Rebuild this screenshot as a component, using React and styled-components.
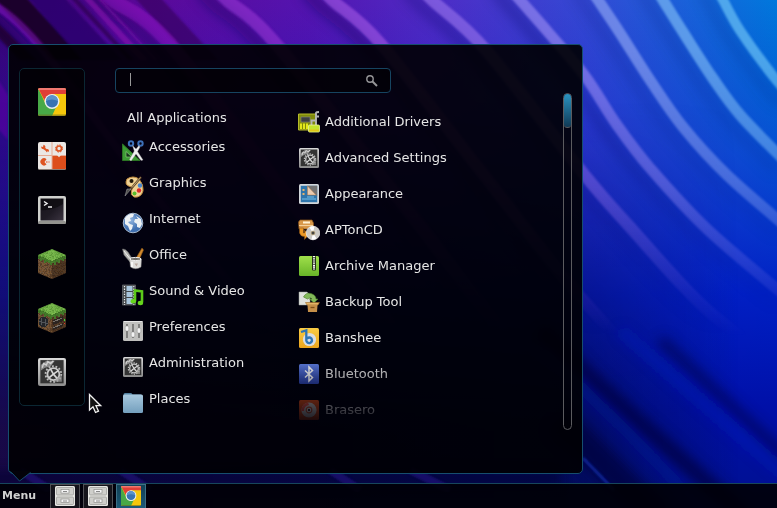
import React from "react";
import styled, { createGlobalStyle, css } from "styled-components";

const Global = createGlobalStyle`
  * { box-sizing: border-box; }
  body { margin: 0; background: #05051c; font-family: "DejaVu Sans", Verdana, sans-serif; }
  button, input { font: inherit; color: inherit; }
  ul { list-style: none; margin: 0; padding: 0; }
`;

const Desktop = styled.div`
  position: relative;
  display: flex;
  flex-direction: column;
  justify-content: flex-end;
  min-height: 100vh;
  overflow: hidden;
  color: #e6e6e6;
  font-size: 13px;
`;

const WallpaperSvg = styled.svg`
  position: absolute;
  inset: 0;
  width: 100%;
  height: 100%;
`;

const MenuPanel = styled.main`
  position: relative;
  display: flex;
  align-items: flex-start;
  gap: 30px;
  max-width: 575px;
  margin: 0 8px 9px;
  padding: 23px 10px 43px;
  border: 1px solid #164e6e;
  border-radius: 5px;
  background: rgba(0, 0, 2, 0.91);
`;

const Tail = styled.svg`
  position: absolute;
  left: 0;
  bottom: -9px;
  width: 24px;
  height: 11px;
`;

const Pointer = styled.svg`
  position: absolute;
  left: 79px;
  top: 348px;
  width: 16px;
  height: 22px;
`;

const Favourites = styled.nav`
  display: flex;
  flex-direction: column;
  align-items: center;
  gap: 26px;
  flex: none;
  width: 66px;
  padding: 19px 0;
  border: 1px solid #0b2733;
  border-radius: 5px;
  background: rgba(0, 0, 0, 0.5);
`;

const IconButton = styled.button`
  display: block;
  padding: 0;
  border: 0;
  background: none;
  line-height: 0;
  svg { width: 28px; height: 28px; overflow: visible; }
`;

const Content = styled.div`
  flex: 1;
  min-width: 0;
`;

const SearchBox = styled.label`
  display: flex;
  align-items: center;
  max-width: 276px;
  height: 25px;
  padding: 0 12px 0 14px;
  border: 1px solid #164460;
  border-radius: 4px;
  background: rgba(0, 0, 0, 0.5);
  svg { width: 13px; height: 13px; flex: none; }
`;

const SearchInput = styled.input`
  flex: 1;
  min-width: 0;
  border: 0;
  padding: 0;
  outline: 0;
  background: none;
`;

const Caret = styled.span`
  width: 1px;
  height: 13px;
  margin-bottom: 2px;
  background: #999;
`;

const Lists = styled.div`
  display: flex;
  height: 337px;
`;

const Categories = styled.ul`
  flex: none;
  width: 183px;
  padding: 11px 0 0 7px;
`;

const Apps = styled.ul`
  flex: 1;
  padding-top: 11px;
  overflow: hidden;
  mask-image: linear-gradient(#000 calc(100% - 74px), transparent);
`;

const Entry = styled.button`
  display: flex;
  gap: 5px;
  align-items: center;
  width: 100%;
  height: 36px;
  padding: 0;
  border: 0;
  background: none;
  text-align: left;
  white-space: nowrap;
  line-height: 16px;
  svg { width: 22px; height: 22px; flex: none; }
  ${(p) => p.$kind === "all" && css`
    height: 29px;
    padding: 0 0 1px 5px;
  `}
  ${(p) => p.$kind === "category" && css`
    span { padding-bottom: 8px; }
  `}
`;

const Scrollbar = styled.div`
  flex: none;
  width: 9px;
  border: 1px solid #5b5b5f;
  border-radius: 5px;
`;

const Thumb = styled.div`
  height: 34px;
  border-bottom: 1px solid #5b5b5f;
  border-radius: 4px;
  background: linear-gradient(#2b93c0, #103a56);
`;

const Taskbar = styled.footer`
  position: relative;
  display: flex;
  gap: 3px;
  height: 25px;
  border-top: 1px solid #17465c;
  background: rgba(0, 0, 4, 0.9);
`;

const MenuButton = styled.button`
  width: 47px;
  padding: 0 0 2px 2px;
  border: 0;
  background: none;
  color: #d0d0d0;
  font-size: 11px;
  font-weight: bold;
  text-align: left;
`;

const TaskButton = styled.button`
  display: flex;
  justify-content: center;
  width: 30px;
  padding: 1px 0 0;
  border: 1px solid #505055;
  border-bottom: 0;
  background: ${(p) => (p.$active ? "linear-gradient(#124056, #1b5a78)" : "#15141b")};
  ${(p) => p.$active && "border-color: #3e6f86;"}
  svg { width: 20px; height: 20px; }
`;

/* ---------- wallpaper ---------- */

/* Smooth open curve through a list of points. */
const curve = (pts) => {
  let d = `M${pts[0]}`;
  for (let i = 0; i < pts.length - 1; i++) {
    const a = pts[i - 1] || pts[i];
    const b = pts[i];
    const c = pts[i + 1];
    const e = pts[i + 2] || c;
    d += `C${b[0] + (c[0] - a[0]) / 6} ${b[1] + (c[1] - a[1]) / 6} ${c[0] - (e[0] - b[0]) / 6} ${c[1] - (e[1] - b[1]) / 6} ${c[0]} ${c[1]}`;
  }
  return d;
};

const ribbons = [
  { p: [[-12, 0], [38, 44], [150, 190], [300, 360], [440, 500]], c: "#a010e0", o: 0.42, w: 8 },
  { p: [[98, -14], [113, 0], [170, 44], [290, 200], [420, 360], [560, 500]], c: "#a81fd0", o: 0.4, w: 14 },
  { p: [[212, -16], [227, 0], [276, 44], [400, 200], [510, 340], [660, 500]], c: "#a03ad8", o: 0.55, w: 13 },
  { p: [[317, -16], [332, 0], [381, 44], [480, 170], [583, 300], [690, 410], [800, 500]], c: "#a85ce8", o: 0.6, w: 12 },
  { p: [[418, -16], [432, 0], [486, 50], [583, 173], [630, 227], [704, 307], [790, 375]], c: "#9a74ee", o: 0.62, w: 12 },
  { p: [[506, -16], [520, 0], [548, 32], [585, 76], [617, 125], [650, 168], [707, 229], [790, 300]], c: "#9a8cf2", o: 0.65, w: 11 },
  { p: [[587, -16], [598, 0], [620, 33], [650, 80], [683, 127], [727, 175], [790, 230]], c: "#8ca2f2", o: 0.68, w: 11 },
  { p: [[653, -16], [663, 0], [683, 32], [712, 77], [741, 116], [790, 166]], c: "#76b4f2", o: 0.72, w: 11 },
  { p: [[714, -16], [723, 0], [741, 32], [777, 81], [795, 100]], c: "#62b8f2", o: 0.78, w: 10 },
].map((r) => ({ ...r, d: curve(r.p) }));

const Wallpaper = () => (
  <WallpaperSvg viewBox="0 0 777 508" preserveAspectRatio="xMinYMin slice" aria-hidden="true">
    <defs>
      <linearGradient id="wBase" x1="0" x2="1" y1="0" y2="0">
        <stop offset="0" stopColor="#3c0474" />
        <stop offset=".18" stopColor="#5a0898" />
        <stop offset=".4" stopColor="#5414b0" />
        <stop offset=".56" stopColor="#4e2cc6" />
        <stop offset=".75" stopColor="#3448d4" />
        <stop offset=".9" stopColor="#1664da" />
        <stop offset="1" stopColor="#0078dc" />
      </linearGradient>
      <linearGradient id="wDeep" x1="0" x2="0" y1="0" y2="1">
        <stop offset="0" stopColor="#0610b4" stopOpacity="0" />
        <stop offset=".3" stopColor="#1012c4" stopOpacity=".4" />
        <stop offset=".58" stopColor="#0014c0" stopOpacity=".88" />
        <stop offset=".8" stopColor="#0010a8" />
        <stop offset="1" stopColor="#001090" />
      </linearGradient>
      <linearGradient id="wLeft" x1="0" x2="1" y1="0" y2="0">
        <stop offset="0" stopColor="#1c0838" stopOpacity=".85" />
        <stop offset=".72" stopColor="#04082e" stopOpacity=".6" />
        <stop offset=".95" stopColor="#04082e" stopOpacity="0" />
      </linearGradient>
      <linearGradient id="wFadeMask" x1="0" x2="0" y1="0" y2="1">
        <stop offset=".1" stopColor="#fff" />
        <stop offset=".36" stopColor="#aaa" />
        <stop offset=".66" stopColor="#000" />
      </linearGradient>
      <linearGradient id="wLowMask" x1="0" x2="0" y1="0" y2="1">
        <stop offset=".2" stopColor="#000" />
        <stop offset=".85" stopColor="#fff" />
      </linearGradient>
      <mask id="fade" maskUnits="userSpaceOnUse" x="0" y="0" width="777" height="508"><rect width="777" height="508" fill="url(#wFadeMask)" /></mask>
      <mask id="low" maskUnits="userSpaceOnUse" x="0" y="0" width="777" height="508"><rect width="777" height="508" fill="url(#wLowMask)" /></mask>
      <filter id="soft" x="-10%" y="-10%" width="120%" height="120%"><feGaussianBlur stdDeviation="6" /></filter>
      <filter id="edge" x="-5%" y="-5%" width="110%" height="110%"><feGaussianBlur stdDeviation="1" /></filter>
    </defs>
    <rect width="777" height="508" fill="url(#wBase)" />
    <rect width="777" height="508" fill="url(#wDeep)" />
    <rect width="777" height="508" fill="url(#wLeft)" mask="url(#low)" />
    <g mask="url(#fade)">
      <g filter="url(#soft)" fill="none" stroke="#10005c">
        {ribbons.map((r, i) => (
          <path key={i} d={r.d} transform="translate(-13 5)" strokeWidth="12" opacity={i > 5 ? 0.15 : i > 3 ? 0.28 : 0.45} />
        ))}
      </g>
    </g>
    <g filter="url(#edge)">
      <path d="M-5 -5H24L84 60H52L-5 0Z" fill="#1a0024" opacity=".9" />
      <path d="M-5 20L-5 34L20 60H36Z" fill="#1a0024" opacity=".7" />
      <path d="M26 -5H62L122 60H82Z" fill="#28006c" opacity=".85" />
      <path d="M68 -5H74L134 60H128Z" fill="#2a0050" opacity=".7" />
      <path d="M80 -5H88L148 60H140Z" fill="#9212b4" opacity=".55" />
      <path d="M94 -5H98L158 60H154Z" fill="#9212b4" opacity=".4" />
      <path d="M132 -5H158L218 60H192Z" fill="#300058" opacity=".6" />
      <path d="M-5 75L8 95V140L-5 125Z" fill="#6d06b0" opacity=".45" />
    </g>
    <g mask="url(#fade)">
      <g filter="url(#edge)" fill="none">
        {ribbons.map((r, i) => (
          <path key={i} d={r.d} stroke={r.c} strokeWidth={r.w} opacity={r.o} />
        ))}
      </g>
    </g>
    <g filter="url(#soft)" fill="none">
      <path d="M540 330Q640 425 750 520" stroke="#010640" strokeWidth="16" opacity=".75" />
      <path d="M660 340Q730 405 820 490" stroke="#010640" strokeWidth="13" opacity=".5" />
      <path d="M560 420L660 520" stroke="#020834" strokeWidth="30" opacity=".6" />
      <path d="M540 350Q630 430 710 520" stroke="#0a22b4" strokeWidth="6" opacity=".45" />
      <path d="M620 330Q710 410 820 505" stroke="#0826c8" strokeWidth="9" opacity=".45" />
      <path d="M-20 478H560" stroke="#08052e" strokeWidth="14" opacity=".6" />
    </g>
    <g fill="none" filter="url(#edge)">
      <path d="M583 458L614 490" stroke="#1230b0" strokeWidth="3" opacity=".7" />
      <path d="M20 470L50 490M120 470L150 490M330 470L360 490M410 470L450 490" stroke="#2a1890" strokeWidth="8" opacity=".5" />
    </g>
  </WallpaperSvg>
);

/* ---------- icons ---------- */

const Chrome = ({ size = 28 }) => (
  <svg viewBox="0 0 28 28" width={size} height={size} aria-hidden="true">
    <clipPath id={`chr${size}`}><rect width="28" height="28" rx="2" /></clipPath>
    <g clipPath={`url(#chr${size})`}>
      <rect width="28" height="28" fill="#f5c60b" />
      <path d="M0 0L8 17L19 17L14 28H0Z" fill="#48a947" />
      <path d="M0 0H28V6H14L7.500 14Z" fill="#df3f37" />
      <path d="M0 0H28V2H0Z" fill="#f07870" />
      <path d="M0 26.500H28V28H0Z" fill="#6b6a20" opacity=".6" />
      <circle cx="14" cy="13.500" r="7.500" fill="#e9eef0" />
      <circle cx="14" cy="13.500" r="6" fill="#3873b4" />
      <path d="M8 13A6 6 0 0 1 20 13Q14 10 8 13Z" fill="#5b93cb" />
    </g>
  </svg>
);

const Tweak = () => (
  <svg viewBox="0 0 28 28" aria-hidden="true">
    <rect width="28" height="28" rx="2" fill="#ebe7e4" />
    <path d="M14 13.500H28V26a2 2 0 0 1-2 2H14Z" fill="#dd4e1b" />
    <path d="M14 0V28M0 13.500H28" stroke="#e6ab94" strokeWidth="1" />
    <path d="M19 13h4l-2 2.200z" fill="#ebe7e4" />
    <path d="M5 5.500L9.500 9" stroke="#de5523" strokeWidth="2.200" />
    <path d="M3 4.500L5 5L5.500 2.800Q8 3.500 7.200 6L5.500 7.200Q3 7 3 4.500ZM8.500 7.500L10 7Q11.500 8 10.800 10L9.500 9L9 10.400Q7.500 9.500 8.500 7.500Z" fill="#de5523" />
    <circle cx="21" cy="6.500" r="2.500" fill="none" stroke="#de5523" strokeWidth="1.700" />
    <circle cx="21" cy="6.500" r="3.600" fill="none" stroke="#de5523" strokeWidth="1" strokeDasharray="1.500 1.330" />
    <path d="M8.500 17.200A3.600 3.600 0 1 0 8.500 22.500L6.500 20Z" fill="#de5523" />
    <path d="M8 20h1.500M10.500 20h1" stroke="#e6795a" strokeWidth="1.400" />
    <path d="M1 27.500H27" stroke="#8c8078" strokeWidth="1" />
  </svg>
);

const Terminal = () => (
  <svg viewBox="0 0 28 28" aria-hidden="true">
    <linearGradient id="term" x1="0" x2="1" y1="0" y2="1">
      <stop offset="0" stopColor="#17131a" /><stop offset=".55" stopColor="#1f1b24" /><stop offset="1" stopColor="#3b3441" />
    </linearGradient>
    <rect width="28" height="28" rx="2" fill="#cfd0cd" />
    <rect y="25" width="28" height="3" rx="1.500" fill="#93938f" />
    <rect x="2.500" y="2.500" width="23" height="22" fill="url(#term)" />
    <path d="M3 14Q14 15 25 8V3H3Z" fill="#0b090d" opacity=".65" />
    <path d="M6 5.500L9 7.500L6 9.500M10 11H14" stroke="#eee" strokeWidth="1.500" fill="none" />
  </svg>
);

const speckle = (tones, seed, x0, y0, w, h) => {
  const out = [];
  let s = seed;
  for (let y = 0; y < h; y++) {
    for (let x = 0; x < w; x++) {
      s = (s * 1103515245 + 12345) % 2147483648;
      out.push(<rect key={`${x}-${y}`} x={x0 + x} y={y0 + y} width="1" height="1" fill={tones[Math.floor((s / 2147483648) * tones.length)]} />);
    }
  }
  return out;
};

const Block = ({ id, server }) => (
  <svg viewBox="0 0 28 28" aria-hidden="true" shapeRendering="crispEdges">
    <clipPath id={`${id}body`}><path d="M0 6L14 12L28 6V23L14 29L0 23Z" /></clipPath>
    <clipPath id={`${id}top`}><path d="M0 5L14-1L28 5V9H26V11H24V10H22V13H20V12H18V15H16V13H14V15H12V13H10V12H8V13H6V10H4V11H2V9H0Z" /></clipPath>
    <g clipPath={`url(#${id}body)`}>
      {speckle(["#5e4128", "#73512f", "#7a5838", "#553b26", "#6a4a33", "#66503c"], 17, 0, 5, 28, 25)}
      <path d="M14 11L28 5V24L14 30Z" fill="#1b0e05" opacity=".38" />
      {server && (
        <>
          <circle cx="5.500" cy="18" r="5" fill="#24262a" />
          <path d="M3 14V21M7 15V22M1 17L10 20" stroke="#525559" strokeWidth="1" />
          <path d="M15 16L25 12V17L15 21ZM15 23L25 19V22L15 26Z" fill="#2b2420" />
          <path d="M15 18L24 14M15 24L24 20" stroke="#75706a" strokeWidth="1" />
          <rect x="26" y="15" width="1" height="2" fill="#34e03a" />
          <rect x="26" y="19" width="1" height="1" fill="#e03a24" />
        </>
      )}
    </g>
    <g clipPath={`url(#${id}top)`}>
      {speckle(["#65a53e", "#6fae45", "#7cbb50", "#5c9838", "#74b34a"], 5, 0, -1, 28, 17)}
      <path d="M0 5L14 11L28 5V17H0Z" fill="#17400c" opacity=".5" />
    </g>
  </svg>
);

const Gears = ({ size = 22, id }) => (
  <svg viewBox={size === 28 ? "1 1 20 20" : "0 0 22 22"} aria-hidden="true">
    <linearGradient id={id} x1="0" x2="0" y1="0" y2="1"><stop offset="0" stopColor="#dadada" /><stop offset="1" stopColor="#8e8e8e" /></linearGradient>
    <rect x="1" y="1" width="20" height="20" rx="1.500" fill={`url(#${id})`} />
    <rect x="2.700" y="2.500" width="16.600" height="16.600" fill="#343434" />
    <path d="M3 10V6L7 3H13L10 7L6 8Z" fill="#8b8b8b" />
    <path d="M4 8L5 5L7 6L8 3.500L10 5L12 3" stroke="#d0d0d0" strokeWidth="1" fill="none" />
    <circle cx="12" cy="12.500" r="4.300" fill="none" stroke="#c9c9c9" strokeWidth="1.300" />
    <circle cx="12" cy="12.500" r="5.600" fill="none" stroke="#bdbdbd" strokeWidth="1.300" strokeDasharray="1.300 1.220" />
    <path d="M12 12.500L9 15M12 12.500L10 9M12 12.500L15.500 16.500M12 12.500L15.500 10" stroke="#d7d7d7" strokeWidth="1.200" />
    <path d="M14 16L18 13V18H13Z" fill="#9b9b9b" opacity=".7" />
  </svg>
);

const S = ({ children }) => <svg viewBox="0 0 22 22" aria-hidden="true">{children}</svg>;

const Accessories = () => (
  <S>
    <path d="M.5 4L18 20.500H.5Z" fill="#3d9c35" stroke="#2b7423" strokeWidth="1" />
    <path d="M4 11.500L10 17H4Z" fill="#17351a" stroke="#8bd07c" strokeWidth=".7" />
    <circle cx="9" cy="3.500" r="2.200" fill="none" stroke="#3d70b8" strokeWidth="2" />
    <circle cx="18.500" cy="3.500" r="2.200" fill="none" stroke="#3d70b8" strokeWidth="2" />
    <path d="M10.500 5.500L14 9L17 5.500L18 7L15.500 11.500L21 20L19 20.500L14 14L9 21L7.500 19.500L12.300 11Z" fill="#efefef" stroke="#aaa" strokeWidth=".4" />
  </S>
);
const Graphics = () => (
  <S>
    <path d="M5 3Q11-1 17 3Q22 9 21 15Q19 22 12 21Q8 19 9.500 15Q11 11 8 10.500Q2 9 5 3Z" fill="#f0d193" stroke="#c08a3c" strokeWidth="1" />
    <circle cx="9.500" cy="5" r="2" fill="#201709" />
    <circle cx="18" cy="9.500" r="2.200" fill="#4985cc" />
    <circle cx="17" cy="14.500" r="2.200" fill="#dc2929" />
    <circle cx="12.500" cy="17.500" r="2" fill="#58bd2b" />
    <path d="M19 1L8 14" stroke="#5f4525" strokeWidth="2.200" />
    <path d="M18.500 1.500L10 11.500" stroke="#d8c090" strokeWidth=".8" />
    <path d="M9 13L3 20L5 13Z" fill="#50504d" stroke="#aaa" strokeWidth=".5" />
  </S>
);
const Internet = () => (
  <S>
    <radialGradient id="globe" cx=".4" cy=".35"><stop offset="0" stopColor="#8fb3df" /><stop offset="1" stopColor="#3f6fb0" /></radialGradient>
    <circle cx="11" cy="11" r="9.800" fill="url(#globe)" stroke="#a6b8cb" strokeWidth="1" />
    <path d="M3 6Q7 1 12 2L11 5L8 6L9 9L6 10L8 12L11 13L10 17L8 19L6 14L3 12ZM14 4L19 7L20 12L18 16L15 15L15 12L12 10L13 7L16 7Z" fill="#edf1f4" />
  </S>
);
const Office = () => (
  <S>
    <path d="M.5 1Q3 .5 6 4L11 12L8 14L2 7Z" fill="#b4b4b0" stroke="#666" strokeWidth=".6" />
    <path d="M2 3L9 12" stroke="#f0f0f0" strokeWidth="1" />
    <path d="M20 0L21.500 2L17 12L13.500 11Z" fill="#d28a2e" stroke="#8a5518" strokeWidth=".6" />
    <path d="M7.500 11H19.500L19 19Q13.500 22.500 8.500 19Z" fill="#deddda" stroke="#888" strokeWidth=".5" />
    <ellipse cx="13.500" cy="11" rx="5.600" ry="1.600" fill="#716e69" stroke="#eee" strokeWidth="1" />
    <path d="M10 14V19" stroke="#fff" strokeWidth="1.500" /><path d="M12.500 15.500H16L14.500 18.500Z" fill="#b8a79e" />
  </S>
);
const SoundVideo = () => (
  <S>
    <rect x=".7" y="1" width="12.600" height="20" fill="#43474a" stroke="#84888a" strokeWidth=".6" />
    <path d="M2.500 2V21M11.800 2V21" stroke="#eee" strokeWidth="1.200" strokeDasharray="1.300 1.300" />
    <path d="M4.500 2H10.500V7H4.500ZM4.500 8H10.500V13H4.500ZM4.500 14H10.500V20H4.500Z" fill="#a8c5dc" />
    <path d="M13 17.500V6.500L20 7.500V18.500" fill="none" stroke="#5ccb1a" strokeWidth="2.600" />
    <ellipse cx="11.300" cy="17.200" rx="2.700" ry="2.200" fill="#66d61c" /><ellipse cx="18.400" cy="19" rx="2.700" ry="2.200" fill="#66d61c" />
  </S>
);
const Preferences = () => (
  <S>
    <rect x="1" y="1" width="20" height="20" rx="1.500" fill="#c0c0be" />
    <path d="M1.500 1.500H20.500" stroke="#e5e5e5" />
    <path d="M5 4V18M11 4V18M17 4V18" stroke="#555" strokeWidth="1.200" />
    <rect x="3.200" y="6" width="3.600" height="5" rx="1" fill="#f4f4f4" stroke="#8b8b8b" strokeWidth=".5" />
    <rect x="9.200" y="12" width="3.600" height="5" rx="1" fill="#f4f4f4" stroke="#8b8b8b" strokeWidth=".5" />
    <rect x="15.200" y="8" width="3.600" height="5" rx="1" fill="#f4f4f4" stroke="#8b8b8b" strokeWidth=".5" />
  </S>
);
const Places = () => (
  <S>
    <linearGradient id="folder" x1="0" x2="0" y1="0" y2="1"><stop offset="0" stopColor="#a8c9df" /><stop offset="1" stopColor="#749fbd" /></linearGradient>
    <path d="M1.500 4V2.500Q1.500 1 3 1H9Q10 1 10.500 2.500H19V5" fill="#507f9f" />
    <rect x="1" y="2.500" width="20" height="18.500" rx="1.500" fill="url(#folder)" />
  </S>
);
const Drivers = () => (
  <S>
    <path d="M.5 3H18V19H.5Z" fill="#7f8a0a" stroke="#b6bb29" strokeWidth="1" />
    <rect x="3" y="6" width="9" height="5" fill="#3e4040" stroke="#888" strokeWidth=".6" />
    <path d="M3 12.500V18M6 12.500V18M9 12.500V18" stroke="#eff21e" strokeWidth="1.800" />
    <path d="M13.500 14V9.500H18V2Q18 1 21 1M18 5.500H21M18 9.500V14" fill="none" stroke="#b4b5b5" strokeWidth="1.900" />
    <rect x="10.500" y="14" width="11" height="7" rx="1" fill="#c5e52e" stroke="#eef79a" strokeWidth=".8" />
    <path d="M11 18.500H21V20.500H11Z" fill="#e0c61a" />
  </S>
);
const Appearance = () => (
  <S>
    <rect x="1" y="1" width="20" height="20" rx="1.500" fill="#d2d6da" />
    <rect x="2.800" y="2.800" width="16.400" height="16.400" fill="#2f75ab" />
    <path d="M9 2.800H19.200V13.500Z" fill="#737373" /><path d="M9.500 3V12H18Z" fill="#e9cbb0" stroke="#c07d47" strokeWidth=".5" />
    <path d="M4.500 7H6.500M4.500 11H6.500" stroke="#e4b36e" strokeWidth="1.800" /><path d="M4 16H18M9 14H16" stroke="#5fa7d3" strokeWidth="1.300" />
  </S>
);
const AptonCd = () => (
  <S>
    <path d="M.5 3L2 1H14L15.500 4V10H1Z" fill="#d8984a" stroke="#8b5319" strokeWidth=".7" />
    <path d="M5 2.500H12V4.500H5Z" fill="#fff2d5" /><path d="M1 6.500H15" stroke="#f5d09a" />
    <path d="M1.500 9V14Q3 18 6.500 17.500V20.500L11 15.500L6.500 11V14H5.500V9Z" fill="#ec9825" stroke="#8b5319" strokeWidth=".5" />
    <circle cx="15" cy="14" r="6.800" fill="#cdcbc6" stroke="#eee" strokeWidth=".7" />
    <path d="M15 14L11.500 8.500A6.500 6.500 0 0 1 16.500 7.500ZM15 14L18.500 19.500A6.500 6.500 0 0 1 13.500 20.500Z" fill="#fff" />
    <circle cx="15" cy="14" r="2" fill="#484741" stroke="#d8c090" strokeWidth=".7" />
  </S>
);
const Archive = () => (
  <S>
    <linearGradient id="arch" x1="0" x2="0" y1="0" y2="1"><stop offset="0" stopColor="#a0e04b" /><stop offset="1" stopColor="#68b428" /></linearGradient>
    <rect x="1" y="1" width="20" height="20" rx="1.500" fill="url(#arch)" />
    <rect x="14" y="1" width="4" height="14.500" rx="1" fill="#24301a" />
    <path d="M16 1V13" stroke="#fff" strokeWidth="2" strokeDasharray="1 .8" /><path d="M16 11V15" stroke="#ddd" strokeWidth="1.300" />
  </S>
);
const Backup = () => (
  <S>
    <path d="M1 1H9L12 4V14H1Z" fill="#dfe2dd" stroke="#9a9d98" strokeWidth=".5" />
    <path d="M5.500 6Q8 1 13 2.500Q18 4 18 8H20L16 12L11.500 8H14Q12 5.500 9.500 8Z" fill="#82b95a" stroke="#497d28" strokeWidth=".6" />
    <path d="M7.500 11.500H21.500L20 14H9Z" fill="#e6b668" stroke="#986725" strokeWidth=".6" />
    <path d="M9.500 14H19.500L19 21H10Z" fill="#c58f49" /><path d="M12.500 16.500H16.500" stroke="#805019" strokeWidth="1.300" />
  </S>
);
const Banshee = () => (
  <S>
    <linearGradient id="ban" x1="0" x2="0" y1="0" y2="1"><stop offset="0" stopColor="#f9cc45" /><stop offset="1" stopColor="#eba51d" /></linearGradient>
    <rect x="1" y="1" width="20" height="20" rx="1.500" fill="url(#ban)" />
    <circle cx="11.500" cy="12.500" r="6.600" fill="#d9dde2" />
    <path d="M3 5L8.300 3.300V13.500Q9 16.500 12 16Q15 14.500 13.500 11.500Q11.500 9.500 9 11.500" fill="none" stroke="#2f76b5" strokeWidth="2.300" />
  </S>
);
const Bluetooth = () => (
  <S>
    <linearGradient id="blu" x1="0" x2="0" y1="0" y2="1"><stop offset="0" stopColor="#5f7ee0" /><stop offset="1" stopColor="#2c44ac" /></linearGradient>
    <rect x="1" y="1" width="20" height="20" rx="1.500" fill="url(#blu)" />
    <path d="M7 7.500L14.500 14.500L11 18V4L14.500 7.500L7 14.500" fill="none" stroke="#fff" strokeWidth="1.500" />
  </S>
);
const Brasero = () => (
  <S>
    <rect x="1" y="1" width="20" height="20" rx="1.500" fill="#e0501a" />
    <circle cx="11" cy="11" r="7.600" fill="#d4d0cd" /><path d="M3.500 12Q3 5 10 3.500L11 6Q6 7 6 12Z" fill="#f25b4c" />
    <circle cx="11" cy="11" r="2.800" fill="#eee" stroke="#c75b39" strokeWidth="1.200" /><circle cx="11" cy="11" r="1.200" fill="#333" />
  </S>
);
const Cabinet = () => (
  <svg viewBox="0 0 20 20" aria-hidden="true">
    <rect width="20" height="20" rx="1.500" fill="#e6e6e2" />
    {[1.5, 11].map((y) => (
      <g key={y}>
        <rect x="1.500" y={y} width="17" height="7.500" rx="1" fill="#cfcfcb" stroke="#9a9a96" strokeWidth=".7" />
        <rect x="6" y={y + 2} width="8" height="3.600" fill="#f5f5f5" stroke="#8e8e8b" strokeWidth=".7" />
        <path d={`M8 ${y + 4}H12`} stroke="#888" />
      </g>
    ))}
  </svg>
);

const favourites = [
  ["Google Chrome", <Chrome />],
  ["Ubuntu Tweak", <Tweak />],
  ["Terminal", <Terminal />],
  ["Minecraft", <Block id="mc" />],
  ["Minecraft Server", <Block id="ms" server />],
  ["Advanced Settings", <Gears size={28} id="gf" />],
];
const categories = [
  ["Accessories", <Accessories />],
  ["Graphics", <Graphics />],
  ["Internet", <Internet />],
  ["Office", <Office />],
  ["Sound & Video", <SoundVideo />],
  ["Preferences", <Preferences />],
  ["Administration", <Gears id="gc" />],
  ["Places", <Places />],
];
const apps = [
  ["Additional Drivers", <Drivers />],
  ["Advanced Settings", <Gears id="ga" />],
  ["Appearance", <Appearance />],
  ["APTonCD", <AptonCd />],
  ["Archive Manager", <Archive />],
  ["Backup Tool", <Backup />],
  ["Banshee", <Banshee />],
  ["Bluetooth", <Bluetooth />],
  ["Brasero", <Brasero />],
];

export default function App() {
  return (
    <Desktop>
      <Global />
      <Wallpaper />
      <MenuPanel>
        <Favourites aria-label="Favourites">
          {favourites.map(([name, icon]) => (
            <IconButton key={name} aria-label={name}>{icon}</IconButton>
          ))}
        </Favourites>
        <Content>
          <SearchBox>
            <Caret />
            <SearchInput type="text" aria-label="Search" />
            <svg viewBox="0 0 13 13" aria-hidden="true">
              <circle cx="5" cy="5" r="3.200" fill="none" stroke="#969698" strokeWidth="1.400" />
              <path d="M7.500 7.500L12 12" stroke="#969698" strokeWidth="2" />
            </svg>
          </SearchBox>
          <Lists>
            <Categories>
              <li><Entry $kind="all">All Applications</Entry></li>
              {categories.map(([name, icon]) => (
                <li key={name}><Entry $kind="category">{icon}<span>{name}</span></Entry></li>
              ))}
            </Categories>
            <Apps>
              {apps.map(([name, icon]) => (
                <li key={name}><Entry>{icon}<span>{name}</span></Entry></li>
              ))}
            </Apps>
            <Scrollbar><Thumb /></Scrollbar>
          </Lists>
        </Content>
        <Tail viewBox="0 0 24 11" aria-hidden="true">
          <path d="M0 0L3 2L10.500 10L21.500 1.500L24 0Z" fill="#030209" />
          <path d="M0 0L3 2L10.500 10L21.500 1.500" fill="none" stroke="#164e6e" />
        </Tail>
        <Pointer viewBox="0 0 16 22" aria-hidden="true">
          <path d="M1.500 1.500V17L5 13.800L7.500 19.500L10.500 18.200L8 12.700H12.700Z" fill="#141414" stroke="#f2f2f2" strokeWidth="1.300" />
        </Pointer>
      </MenuPanel>
      <Taskbar>
        <MenuButton>Menu</MenuButton>
        <TaskButton aria-label="Files"><Cabinet /></TaskButton>
        <TaskButton aria-label="Files, second window"><Cabinet /></TaskButton>
        <TaskButton $active aria-label="Google Chrome"><Chrome size={20} /></TaskButton>
      </Taskbar>
    </Desktop>
  );
}
